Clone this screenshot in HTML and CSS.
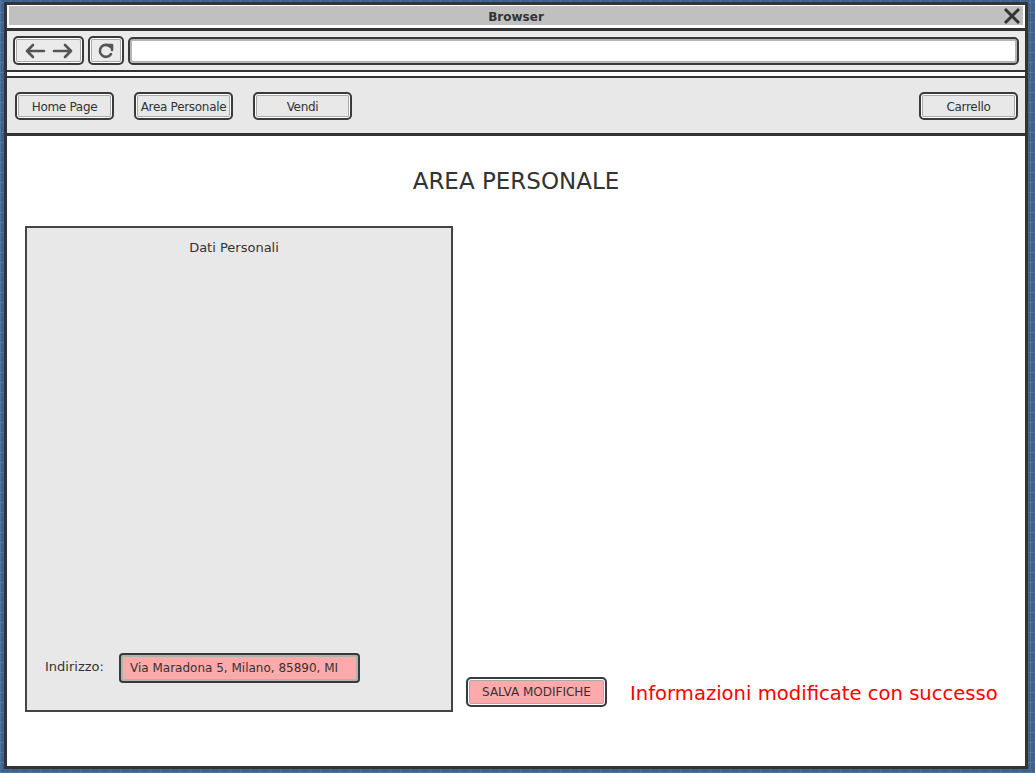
FILE: index.html
```html
<!DOCTYPE html>
<html lang="it">
<head>
<meta charset="utf-8">
<title>Area Personale</title>
<link rel="stylesheet" href="styles.css">
</head>
<body>
<div class="window">
  <div class="titlebar">
    <span class="title-text">Browser</span>
    <svg class="close" width="18" height="18" viewBox="0 0 18 18"><path d="M2 2 L16 16 M16 2 L2 16" stroke="#333" stroke-width="3" fill="none"/></svg>
  </div>
  <div class="toolbar">
    <div class="tbtn nav-arrows">
      <svg width="22" height="16" viewBox="0 0 22 16"><path d="M20 8 H3 M9 2 L3 8 L9 14" stroke="#555" stroke-width="2.6" fill="none" stroke-linecap="round" stroke-linejoin="round"/></svg>
      <svg width="22" height="16" viewBox="0 0 22 16"><path d="M2 8 H19 M13 2 L19 8 L13 14" stroke="#555" stroke-width="2.6" fill="none" stroke-linecap="round" stroke-linejoin="round"/></svg>
    </div>
    <div class="tbtn refresh">
      <svg width="18" height="18" viewBox="0 0 18 18"><path d="M13.5 5 A6 6 0 1 0 14 12" stroke="#555" stroke-width="2.6" fill="none" stroke-linecap="round"/><path d="M10 3 L15 3 L15 8" stroke="#555" stroke-width="2.6" fill="none" stroke-linecap="round" stroke-linejoin="round"/></svg>
    </div>
    <div class="address"></div>
  </div>
  <div class="gap"></div>
  <div class="navbar">
    <div class="nbtn">Home Page</div>
    <div class="nbtn">Area Personale</div>
    <div class="nbtn">Vendi</div>
    <div class="spacer"></div>
    <div class="nbtn">Carrello</div>
  </div>
  <div class="content">
    <h1 class="page-title">AREA PERSONALE</h1>
    <div class="row">
      <div class="panel">
        <div class="panel-title">Dati Personali</div>
        <div class="field">
          <span class="label">Indirizzo:</span>
          <div class="input">Via Maradona 5, Milano, 85890, MI</div>
        </div>
      </div>
      <div class="actions">
        <div class="save">SALVA MODIFICHE</div>
        <div class="msg">Informazioni modificate con successo</div>
      </div>
    </div>
  </div>
</div>
</body>
</html>
```
FILE: styles.css
```css
html, body {
  margin: 0;
  padding: 0;
}
body {
  width: 1035px;
  height: 773px;
  overflow: hidden;
  background-color: #3f628c;
  background-image:
    repeating-linear-gradient(0deg, rgba(100,135,175,0.45) 0 1px, transparent 1px 10px),
    repeating-linear-gradient(90deg, rgba(100,135,175,0.45) 0 1px, transparent 1px 10px);
  font-family: "DejaVu Sans", sans-serif;
  color: #333;
  padding: 2px 7px 4px 4px;
  box-sizing: border-box;
}
.window {
  height: 767px;
  box-sizing: border-box;
  border: 3px solid #333;
  background: #fff;
  display: flex;
  flex-direction: column;
}
.titlebar {
  margin: 1px 2px 3px 2px;
  height: 19px;
  box-sizing: border-box;
  padding-top: 3px;
  background: #c0c0c0;
  position: relative;
  display: flex;
  align-items: center;
  justify-content: center;
}
.title-text {
  font-size: 12px;
  font-weight: bold;
  color: #333;
}
.close {
  position: absolute;
  right: 2px;
  top: 1px;
}
.toolbar {
  border-top: 3px solid #333;
  border-bottom: 2px solid #333;
  background: #ebebeb;
  height: 39px;
  box-sizing: content-box;
  display: flex;
  align-items: center;
  padding: 0 6px;
  gap: 4px;
}
.tbtn {
  height: 29px;
  box-sizing: border-box;
  border: 2px solid #3a3a3a;
  border-radius: 5px;
  box-shadow: inset 0 0 0 1px #fff, inset 0 0 0 2px #aaa;
  display: flex;
  align-items: center;
  justify-content: center;
}
.nav-arrows {
  width: 71px;
  gap: 6px;
}
.refresh {
  width: 36px;
}
.address {
  flex: 1;
  height: 28px;
  box-sizing: border-box;
  border: 2px solid #3a3a3a;
  border-radius: 5px;
  background: #fff;
  box-shadow: inset 0 0 0 2px #b5b5b5;
}
.gap {
  height: 4px;
  background: #fff;
}
.navbar {
  border-top: 2px solid #333;
  border-bottom: 3px solid #333;
  background: #e8e8e8;
  display: flex;
  align-items: flex-start;
  padding: 14px 7px 0 8px;
  box-sizing: border-box;
  height: 60px;
  gap: 20px;
}
.spacer {
  flex: 1;
}
.nbtn {
  width: 99px;
  height: 28px;
  box-sizing: border-box;
  padding-top: 2px;
  border: 2px solid #3a3a3a;
  border-radius: 5px;
  box-shadow: inset 0 0 0 1px #fff, inset 0 0 0 2px #aaa;
  display: flex;
  align-items: center;
  justify-content: center;
  font-size: 12px;
  color: #333;
  white-space: nowrap;
  letter-spacing: -0.3px;
}
.content {
  flex: 1;
  display: flex;
  flex-direction: column;
  padding: 32px 0 0 18px;
}
.page-title {
  margin: 0;
  font-weight: normal;
  font-size: 23px;
  line-height: 26px;
  text-align: center;
  margin-left: -18px;
  color: #333;
}
.row {
  margin-top: 32px;
  display: flex;
  align-items: flex-end;
}
.panel {
  width: 428px;
  height: 486px;
  box-sizing: border-box;
  border: 2px solid #444;
  background: #e8e8e8;
  display: flex;
  flex-direction: column;
  justify-content: space-between;
  padding: 12px 0 27px 18px;
}
.panel-title {
  text-align: center;
  font-size: 13px;
  margin-left: -28px;
}
.field {
  display: flex;
  align-items: center;
}
.label {
  font-size: 13px;
  width: 74px;
  padding-bottom: 3px;
}
.input {
  width: 241px;
  height: 30px;
  box-sizing: border-box;
  border: 2px solid #3a3a3a;
  border-radius: 4px;
  background: #ffaaaa;
  box-shadow: inset 0 0 0 2px #b0b0b0;
  font-size: 12px;
  display: flex;
  align-items: center;
  padding-left: 9px;
  white-space: nowrap;
}
.actions {
  display: flex;
  align-items: center;
  margin: 0 0 5px 13px;
  gap: 23px;
}
.save {
  width: 141px;
  height: 30px;
  box-sizing: border-box;
  border: 2px solid #3a3a3a;
  border-radius: 5px;
  background: #ffaaaa;
  box-shadow: inset 0 0 0 1px #fff, inset 0 0 0 2px #aaa;
  font-size: 12px;
  display: flex;
  align-items: center;
  justify-content: center;
  white-space: nowrap;
}
.msg {
  color: #ff0000;
  font-size: 19.6px;
  white-space: nowrap;
  padding-top: 3px;
}
```
